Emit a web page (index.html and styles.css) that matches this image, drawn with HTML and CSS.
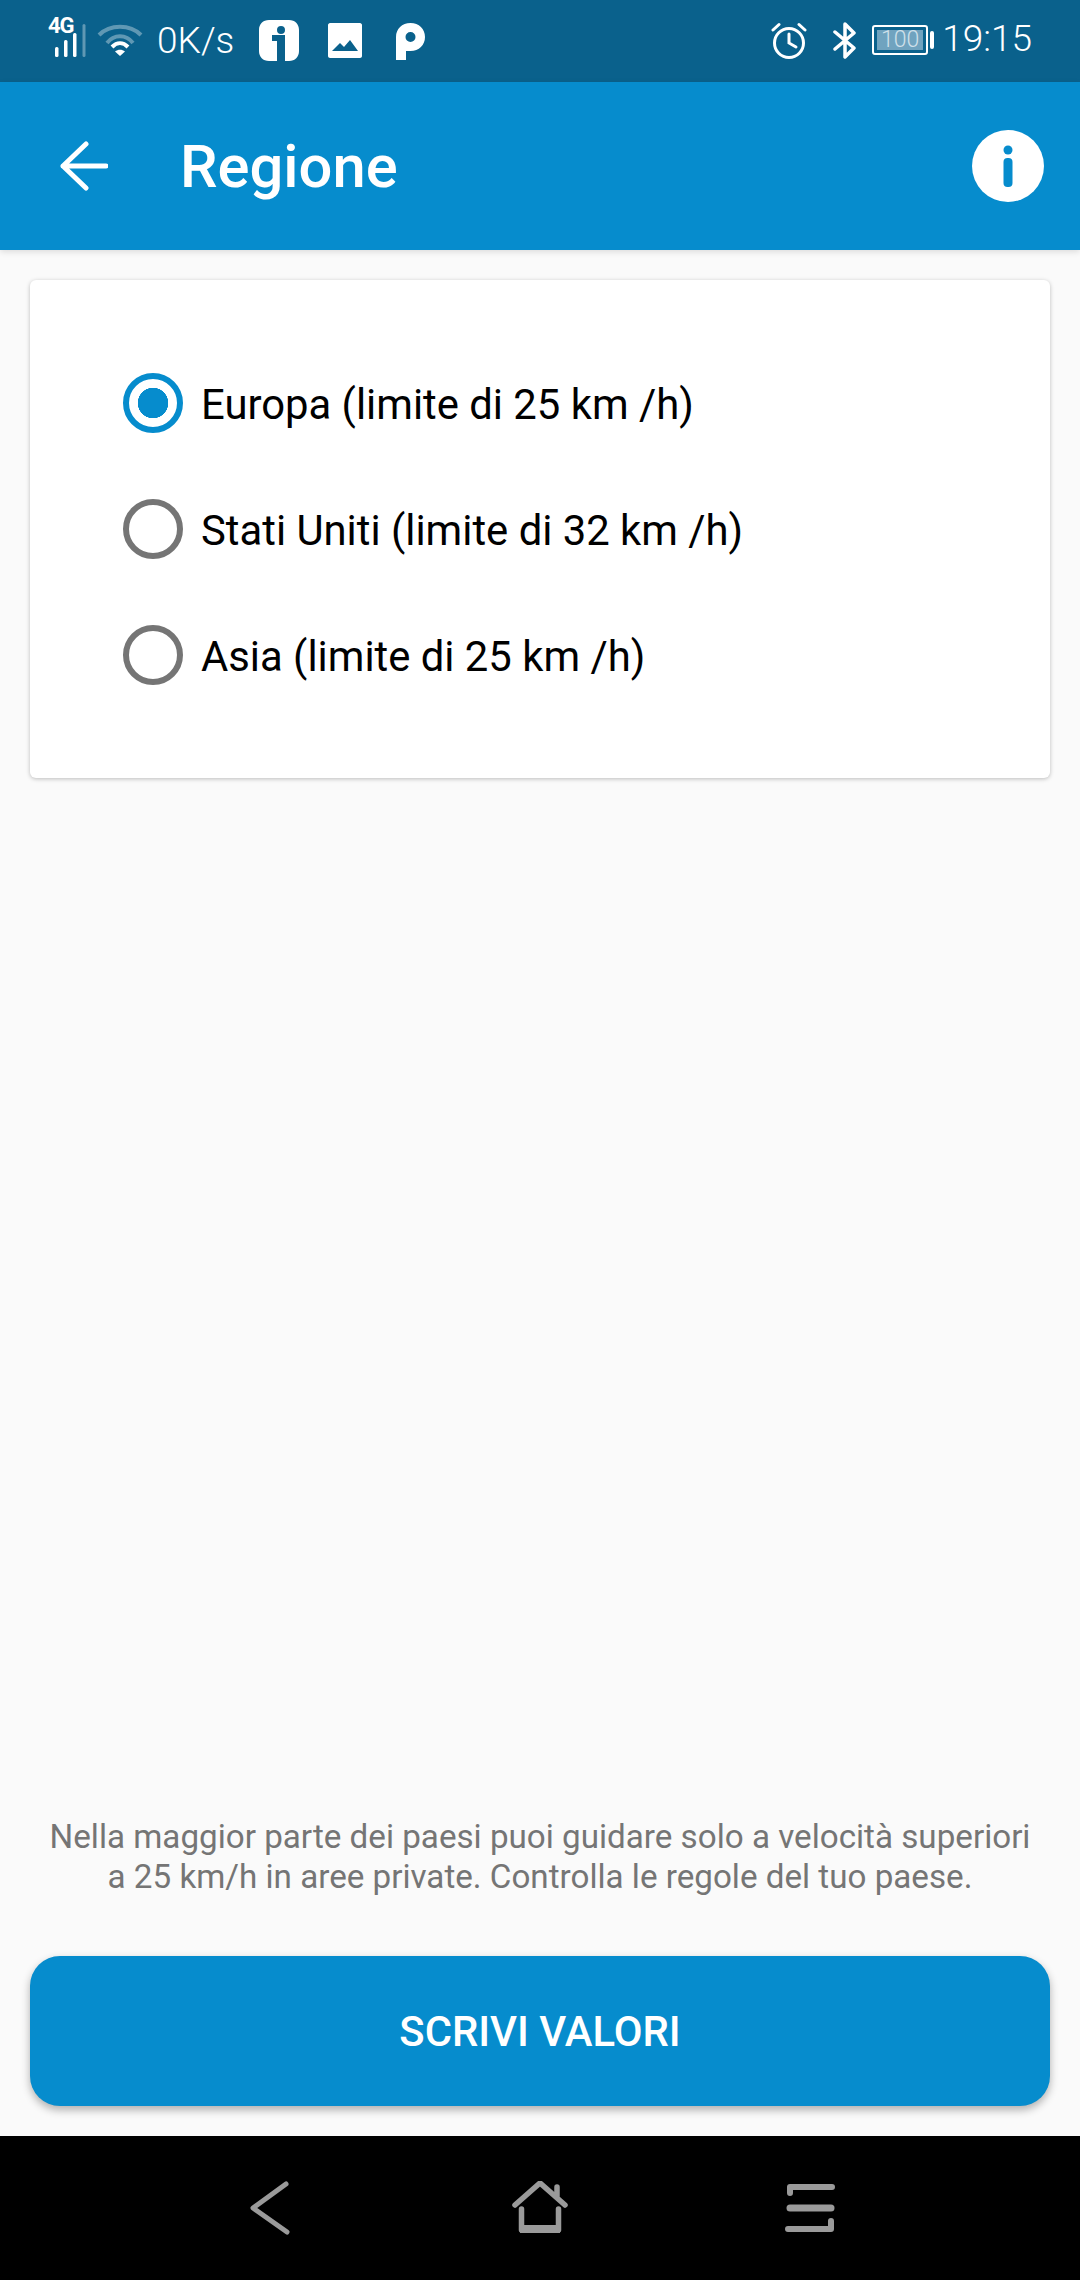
FILE: index.html
```html
<!DOCTYPE html>
<html lang="it">
<head>
    <meta charset="UTF-8">
    <meta name="viewport" content="width=device-width, initial-scale=1.0">
    <title>Regione</title>
    <link rel="stylesheet" href="styles.css">
</head>
<body>
    <div class="status">
        <div class="signal">
            <span class="net">4G</span>
            <svg class="bars" width="32" height="34" viewBox="0 0 32 34">
                <rect x="0" y="24" width="3.5" height="10" rx="1.5" fill="#fff"/>
                <rect x="9" y="17" width="3.5" height="17" rx="1.5" fill="#fff"/>
                <rect x="18" y="10" width="3.5" height="24" rx="1.5" fill="#fff"/>
                <rect x="27.5" y="1" width="3" height="33" rx="1.5" fill="#fff" opacity=".35"/>
            </svg>
        </div>
        <svg class="wifi" width="46" height="34" viewBox="0 0 46 34" fill="none" stroke="#fff" stroke-width="4">
            <path d="M2 12C13 1 33 1 44 12" opacity=".35"/>
            <path d="M10 20C17 11 29 11 36 20" opacity=".35"/>
            <path d="M15 24C20 19 26 19 31 24"/>
            <path d="M18 28.5L23 33L28 28.5C25 26 21 26 18 28.5Z" fill="#fff" stroke="none"/>
        </svg>
        <span class="speed">0K/s</span>
        <svg class="app-i" width="40" height="41" viewBox="0 0 40 41">
            <path fill="#fff" fill-rule="evenodd" d="M10 0H30C36 0 40 4 40 10V31C40 37 36 41 30 41H26V15H13V21H18V41H10C4 41 0 37 0 31V10C0 4 4 0 10 0ZM22 6A4 4 0 1 0 22 14A4 4 0 1 0 22 6Z"/>
        </svg>
        <svg class="app-img" width="34" height="35" viewBox="0 0 34 35">
            <path fill="#fff" fill-rule="evenodd" d="M2 0H32C33 0 34 1 34 2V33C34 34 33 35 32 35H2C1 35 0 34 0 33V2C0 1 1 0 2 0ZM4 28H30L22 17L16 24L12 20Z"/>
        </svg>
        <svg class="app-p" width="29" height="37" viewBox="0 0 29 37">
            <path fill="#fff" fill-rule="evenodd" d="M0 14C0 6 6 0 14.5 0C23 0 29 6 29 14C29 22 23 28 14.5 28H10V37H0ZM14.5 9A5 5 0 1 0 14.5 19A5 5 0 1 0 14.5 9Z"/>
        </svg>
        <div class="status-right">
            <svg class="alarm" width="36" height="37" viewBox="0 0 36 37" fill="none" stroke="#fff" stroke-width="3" stroke-linecap="round">
                <circle cx="18" cy="21" r="14.5"/>
                <path d="M18 12V21L25 25"/>
                <path d="M2 8L8 2.5M34 8L28 2.5"/>
            </svg>
            <svg class="bt" width="24" height="37" viewBox="0 0 24 37" fill="none" stroke="#fff" stroke-width="3.5" stroke-linecap="round" stroke-linejoin="round">
                <path d="M2 10L21 26L12 35V2L21 11L2 27"/>
            </svg>
            <div class="battery"><span class="level">100</span></div>
            <div class="nub"></div>
            <span class="clock">19:15</span>
        </div>
    </div>

    <header class="topbar">
        <svg class="back" width="48" height="50" viewBox="0 0 48 50" fill="none" stroke="#fff" stroke-width="5" stroke-linecap="round" stroke-linejoin="round">
            <path d="M46 25H3M26 3L3 25L26 47"/>
        </svg>
        <h1 class="title">Regione</h1>
        <svg class="info" width="72" height="72" viewBox="0 0 72 72">
            <circle cx="36" cy="36" r="36" fill="#fff"/>
            <circle cx="36" cy="20" r="4.5" fill="#068ccd"/>
            <rect x="31.5" y="28" width="9" height="29" rx="4" fill="#068ccd"/>
        </svg>
    </header>

    <main class="content">
        <section class="card">
            <label class="option">
                <span class="radio radio-on"></span>
                <span class="option-text">Europa (limite di 25 km /h)</span>
            </label>
            <label class="option">
                <span class="radio"></span>
                <span class="option-text">Stati Uniti (limite di 32 km /h)</span>
            </label>
            <label class="option">
                <span class="radio"></span>
                <span class="option-text">Asia (limite di 25 km /h)</span>
            </label>
        </section>

        <p class="note">Nella maggior parte dei paesi puoi guidare solo a velocità superiori<br>a 25 km/h in aree private. Controlla le regole del tuo paese.</p>
        <button class="write">SCRIVI VALORI</button>
    </main>

    <nav class="navbar">
        <svg width="42" height="54" viewBox="0 0 42 54" fill="none" stroke="#9a9a9a" stroke-width="5" stroke-linecap="round" stroke-linejoin="round">
            <path d="M37 3L4 27L38 51"/>
        </svg>
        <svg width="56" height="54" viewBox="0 0 56 54" fill="none" stroke="#9a9a9a" stroke-width="5.5" stroke-linecap="round" stroke-linejoin="round">
            <path d="M3 24L28 2L53 24M45 6V15"/>
            <path d="M9.5 28V49H46.5V28"/>
            <rect x="8" y="44" width="40" height="8" fill="#9a9a9a" stroke="none"/>
        </svg>
        <svg width="50" height="50" viewBox="0 0 50 50" fill="none" stroke="#9a9a9a" stroke-width="7" stroke-linecap="round" stroke-linejoin="round">
            <path d="M47 4H5V10" stroke-width="6"/>
            <path d="M5 25H46"/>
            <path d="M3 46H46V38" stroke-width="6"/>
        </svg>
    </nav>
</body>
</html>
```

FILE: styles.css
```css
* {
box-sizing: border-box;
}

body {
margin: 0;
height: 2280px;
display: flex;
flex-direction: column;
background-color: #fafafa;
font-family: Roboto, sans-serif;
}

.status {
display: flex;
align-items: flex-start;
height: 82px;
padding-left: 48px;
background-color: #0a618c;
color: #fff;
}

.signal {
position: relative;
width: 38px;
height: 56px;
}

.net {
position: absolute;
left: 0;
top: 15px;
font-size: 22px;
font-weight: 700;
line-height: 22px;
letter-spacing: -1px;
}

.bars {
position: absolute;
left: 7px;
top: 23px;
}

.wifi {
margin: 23px 0 0 11px;
}

.speed {
margin: 20px 0 0 14px;
font-size: 37px;
font-weight: 300;
line-height: 42px;
}

.app-i {
margin: 20px 0 0 25px;
}

.app-img {
margin: 23px 0 0 29px;
}

.app-p {
margin: 23px 0 0 34px;
}

.status-right {
display: flex;
align-items: flex-start;
margin-left: auto;
padding-right: 48px;
}

.alarm {
margin-top: 22px;
}

.bt {
margin: 22px 0 0 26px;
}

.battery {
display: flex;
width: 56px;
height: 30px;
margin: 25px 0 0 15px;
padding: 3px;
border: 2px solid #fff;
border-radius: 3px;
}

.level {
flex: 1;
background-color: #70a3bf;
color: #cfe0ea;
font-size: 23px;
font-weight: 300;
line-height: 20px;
text-align: center;
}

.nub {
width: 4px;
height: 18px;
margin: 31px 0 0 2px;
border-radius: 2px;
background-color: #fff;
}

.clock {
margin: 18px 0 0 8px;
font-size: 37px;
font-weight: 300;
line-height: 42px;
}

.topbar {
display: flex;
align-items: center;
height: 168px;
padding: 0 36px 0 60px;
background-color: #068ccd;
box-shadow: 0 2px 6px rgba(0, 0, 0, 0.12);
z-index: 1;
}

.title {
margin: 2px 0 0 72px;
color: #fff;
font-size: 59.7px;
font-weight: 500;
}

.info {
margin-left: auto;
}

.content {
flex: 1;
display: flex;
flex-direction: column;
padding: 30px;
}

.card {
display: flex;
flex-direction: column;
gap: 66px;
height: 498px;
padding: 93px 93px 0;
border-radius: 6px;
background-color: #fff;
box-shadow: 0 1px 4px rgba(0, 0, 0, 0.25);
}

.option {
display: flex;
align-items: center;
gap: 18px;
height: 60px;
}

.radio {
width: 60px;
height: 60px;
border: 6px solid #757575;
border-radius: 50%;
}

.radio-on {
border-color: #068ccd;
background: radial-gradient(circle, #068ccd 15px, #fff 15.5px);
}

.option-text {
margin-top: 2px;
color: #000;
font-size: 41.8px;
}

.note {
margin: auto 0 0;
color: #757575;
font-size: 33.2px;
line-height: 40px;
text-align: center;
}

.write {
height: 150px;
margin-top: 59px;
border: none;
border-radius: 30px;
background-color: #068ccd;
box-shadow: 0 4px 8px rgba(0, 0, 0, 0.3);
color: #fff;
font-family: inherit;
font-size: 41.8px;
font-weight: 500;
}

.navbar {
display: grid;
grid-template-columns: repeat(3, 270px);
justify-content: center;
justify-items: center;
align-items: center;
height: 144px;
background-color: #000;
}
```
